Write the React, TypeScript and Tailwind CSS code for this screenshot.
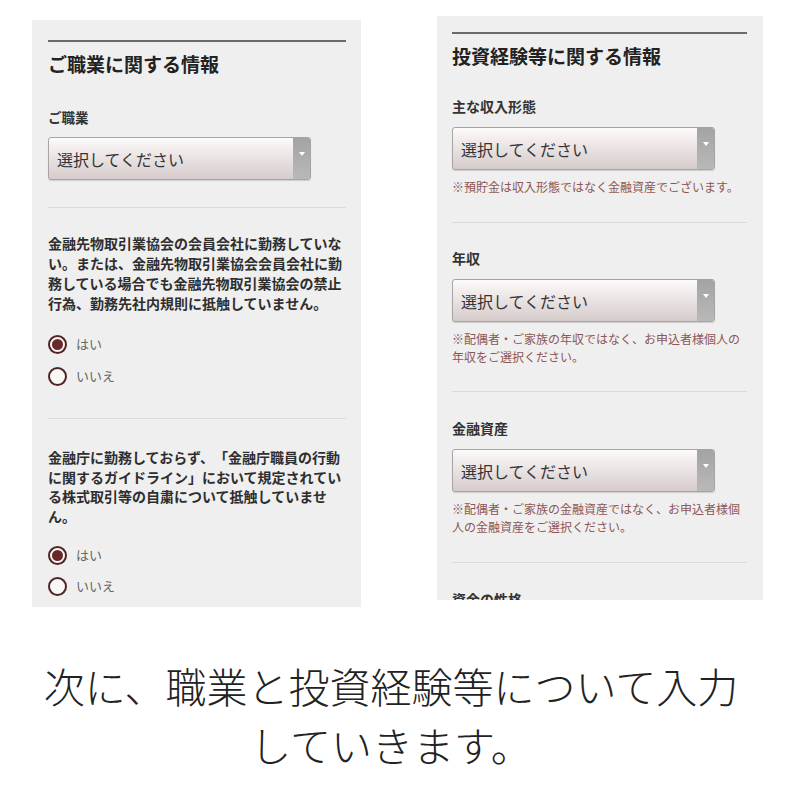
import React from "react";

const jp = { fontFamily: '"Noto Sans CJK JP", "Noto Sans", sans-serif' };

function Select() {
  return (
    <div className="flex h-[43px] w-[263px] overflow-hidden rounded-[3px] border border-[#a9a4a4] bg-gradient-to-b from-[#fdfafa] to-[#d6cbcb] shadow-[0_1px_1px_rgba(0,0,0,0.15)]">
      <div className="flex flex-1 items-center pl-[8px] text-[16px] text-[#333]">選択してください</div>
      <div className="flex w-[17px] justify-center bg-gradient-to-b from-[#a3a3a3] to-[#b9b9b9] pt-[14px]">
        <div className="h-0 w-0 border-x-[3px] border-t-[4px] border-x-transparent border-t-white" />
      </div>
    </div>
  );
}

function Radio({ checked, label }: { checked?: boolean; label: string }) {
  return (
    <div className="flex h-[20px] items-center gap-[9px]">
      <div className="flex h-[19px] w-[19px] items-center justify-center rounded-full border-2 border-[#4e2424] bg-[#faf7f7]">
        {checked && <div className="h-[11px] w-[11px] rounded-full bg-[#6b2828]" />}
      </div>
      <span className="text-[13px] text-[#666]">{label}</span>
    </div>
  );
}

export default function App() {
  return (
    <div className="min-h-[800px] w-[800px] bg-white [text-spacing-trim:space-all]" style={jp}>
      <div className="flex items-start">
        {/* Left panel */}
        <div className="ml-[32px] mt-[20px] h-[587px] w-[329px] overflow-hidden bg-[#efefef] pl-[16px] pr-[15px]">
          <div className="mt-[20px] h-[2px] bg-[#6a6a6a]" />
          <div className="mt-[10px] text-[19px] font-bold leading-[24px] text-[#222]">ご職業に関する情報</div>
          <div className="mt-[32px] text-[13.5px] font-bold leading-[18px] text-[#333]">ご職業</div>
          <div className="mt-[11px]">
            <Select />
          </div>
          <div className="mt-[27px] h-px bg-[#dadada]" />
          <p className="mt-[25px] text-[14px] font-bold leading-[20px] text-[#2e2e2e]">
            金融先物取引業協会の会員会社に勤務していな<br />
            い。または、金融先物取引業協会会員会社に勤<br />
            務している場合でも金融先物取引業協会の禁止<br />
            行為、勤務先社内規則に抵触していません。
          </p>
          <div className="mt-[21px] flex flex-col gap-[12px]">
            <Radio checked label="はい" />
            <Radio label="いいえ" />
          </div>
          <div className="mt-[32px] h-px bg-[#dadada]" />
          <p className="mt-[29px] text-[14px] font-bold leading-[19.5px] text-[#2e2e2e]">
            金融庁に勤務しておらず、「金融庁職員の行動<br />
            に関するガイドライン」において規定されてい<br />
            る株式取引等の自粛について抵触していませ<br />
            ん。
          </p>
          <div className="mt-[19px] flex flex-col gap-[11px]">
            <Radio checked label="はい" />
            <Radio label="いいえ" />
          </div>
        </div>

        {/* Right panel */}
        <div className="ml-[76px] mt-[16px] h-[584px] w-[326px] overflow-hidden bg-[#efefef] pl-[15px] pr-[16px]">
          <div className="mt-[16px] h-[2px] bg-[#6a6a6a]" />
          <div className="mt-[10px] text-[19px] font-bold leading-[24px] text-[#222]">投資経験等に関する情報</div>
          <div className="mt-[29px] text-[14px] font-bold leading-[18px] text-[#333]">主な収入形態</div>
          <div className="mt-[12px]">
            <Select />
          </div>
          <p className="mt-[8px] text-[12px] leading-[18px] text-[#8d5656]">※預貯金は収入形態ではなく金融資産でございます。</p>
          <div className="mt-[26px] h-px bg-[#dadada]" />
          <div className="mt-[26px] text-[14px] font-bold leading-[18px] text-[#333]">年収</div>
          <div className="mt-[12px]">
            <Select />
          </div>
          <p className="mt-[8px] text-[12px] leading-[18px] text-[#8d5656]">
            ※配偶者・ご家族の年収ではなく、お申込者様個人の<br />
            年収をご選択ください。
          </p>
          <div className="mt-[25px] h-px bg-[#dadada]" />
          <div className="mt-[27px] text-[14px] font-bold leading-[18px] text-[#333]">金融資産</div>
          <div className="mt-[12px]">
            <Select />
          </div>
          <p className="mt-[8px] text-[12px] leading-[18px] text-[#8d5656]">
            ※配偶者・ご家族の金融資産ではなく、お申込者様個<br />
            人の金融資産をご選択ください。
          </p>
          <div className="mt-[26px] h-px bg-[#dadada]" />
          <div className="mt-[27px] text-[14px] font-bold leading-[18px] text-[#333]">資金の性格</div>
        </div>
      </div>

      <div className="mt-[49px] pr-[18px] text-center text-[41px] font-light leading-[59px] text-[#222]">
        次に、職業と投資経験等について入力
        <br />
        していきます。
      </div>
    </div>
  );
}
